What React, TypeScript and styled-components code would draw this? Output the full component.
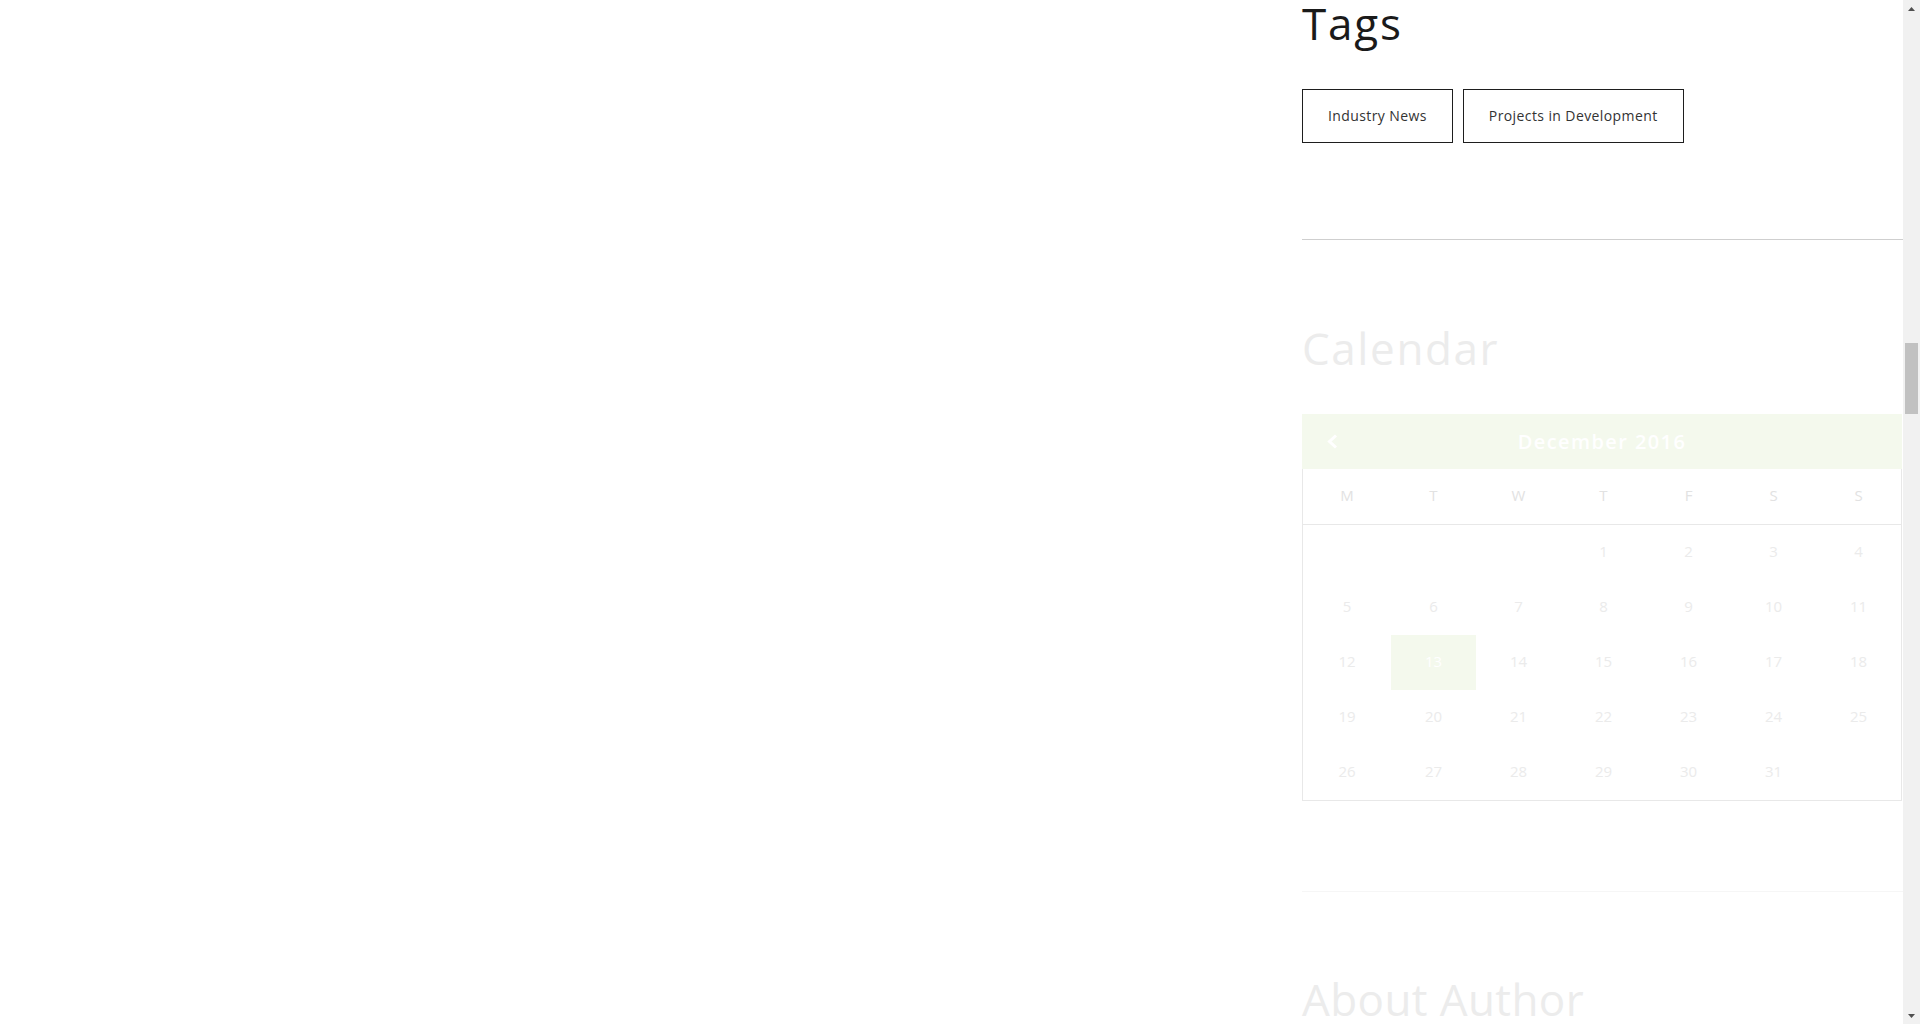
import styled, { createGlobalStyle } from 'styled-components'

const GREEN_TINT = '#f4f9ed'
const FONT = `'Open Sans', 'Liberation Sans', sans-serif`

const GlobalStyle = createGlobalStyle`
  html, body {
    margin: 0;
    padding: 0;
    background: #ffffff;
    overflow: hidden;
  }
  body {
    font-family: ${FONT};
  }
`

const Viewport = styled.div`
  display: flex;
  width: 100%;
  height: 100vh;
  overflow: hidden;
`

const Page = styled.div`
  flex: 1;
  display: grid;
  grid-template-columns: 1fr 601px;
`

const Sidebar = styled.aside`
  display: flex;
  flex-direction: column;
`

type WidgetProps = {
  top: number
  bottom: number
  faintLine?: boolean
}
const Widget = styled.section<WidgetProps>`
  padding-top: ${(props) => props.top}px;
  padding-bottom: ${(props) => props.bottom}px;
  border-bottom: 1px solid ${(props) => (props.faintLine ? '#f6f6f6' : '#cfcfcf')};

  &:last-child {
    border-bottom: none;
  }
`

type HeadingProps = {
  faded?: boolean
  spread?: number
}
const Heading = styled.h3<HeadingProps>`
  margin: 0 0 44px 0;
  font-family: ${FONT};
  font-size: 44px;
  line-height: 44px;
  font-weight: 400;
  letter-spacing: ${(props) => props.spread ?? 1}px;
  color: ${(props) => (props.faded ? '#ececec' : '#1a1a1a')};
`

const TagList = styled.div`
  display: flex;
  flex-wrap: wrap;
  gap: 10px;
`

const Tag = styled.a`
  display: inline-block;
  padding: 15px 25px;
  margin-bottom: 5px;
  border: 1px solid #1e1e1e;
  font-size: 14px;
  line-height: 22px;
  letter-spacing: 0.4px;
  color: #333333;
  text-decoration: none;
`

const Calendar = styled.div`
  width: 600px;
`

const CalendarHeader = styled.div`
  display: grid;
  grid-template-columns: 60px 1fr 60px;
  align-items: center;
  height: 55px;
  background: ${GREEN_TINT};
`

const PrevButton = styled.span`
  display: flex;
  align-items: center;
  padding-left: 25px;
`

const MonthTitle = styled.div`
  text-align: center;
  font-size: 20px;
  font-weight: 600;
  letter-spacing: 1.4px;
  color: #ffffff;
`

const Grid = styled.div`
  border: 1px solid #e8e8e8;
  border-top: none;
`

const WeekRow = styled.div`
  display: grid;
  grid-template-columns: 88px repeat(6, 1fr);
  height: 55px;
  border-bottom: 1px solid #e8e8e8;
`

const DayRow = styled.div`
  display: grid;
  grid-template-columns: 88px repeat(6, 1fr);
  height: 55px;
`

type CellProps = {
  active?: boolean
  head?: boolean
}
const Cell = styled.div<CellProps>`
  display: flex;
  align-items: center;
  justify-content: center;
  padding-bottom: 3px;
  font-size: 15px;
  color: ${(props) =>
    props.active ? '#ffffff' : props.head ? '#e2e2e2' : '#ebebeb'};
  background: ${(props) => (props.active ? GREEN_TINT : 'transparent')};
`

const Scrollbar = styled.div`
  width: 17px;
  display: flex;
  flex-direction: column;
  align-items: center;
  background: #f1f1f1;
`

const Arrow = styled.div`
  height: 17px;
  width: 17px;
  display: flex;
  align-items: center;
  justify-content: center;
`

const Thumb = styled.div`
  width: 13px;
  height: 71px;
  margin-top: 326px;
  background: #c1c1c1;
`

const Spacer = styled.div`
  flex: 1;
`

const WEEKDAYS = ['M', 'T', 'W', 'T', 'F', 'S', 'S']
const WEEKS: (number | null)[][] = [
  [null, null, null, 1, 2, 3, 4],
  [5, 6, 7, 8, 9, 10, 11],
  [12, 13, 14, 15, 16, 17, 18],
  [19, 20, 21, 22, 23, 24, 25],
  [26, 27, 28, 29, 30, 31, null],
]

export default function App() {
  return (
    <>
      <GlobalStyle />
      <Viewport>
        <Page>
          <div />
          <Sidebar>
            <Widget top={1} bottom={91}>
              <Heading spread={1.8}>Tags</Heading>
              <TagList>
                <Tag href="#">Industry News</Tag>
                <Tag href="#">Projects in Development</Tag>
              </TagList>
            </Widget>
            <Widget top={86} bottom={90} faintLine>
              <Heading faded spread={1.6}>
                Calendar
              </Heading>
              <Calendar>
                <CalendarHeader>
                  <PrevButton>
                    <svg width="11" height="15" viewBox="0 0 11 15">
                      <polyline
                        points="9,1.5 2.5,7.5 9,13.5"
                        fill="none"
                        stroke="#ffffff"
                        strokeWidth="3"
                      />
                    </svg>
                  </PrevButton>
                  <MonthTitle>December 2016</MonthTitle>
                  <span />
                </CalendarHeader>
                <Grid>
                  <WeekRow>
                    {WEEKDAYS.map((d, i) => (
                      <Cell key={i} head>
                        {d}
                      </Cell>
                    ))}
                  </WeekRow>
                  {WEEKS.map((week, w) => (
                    <DayRow key={w}>
                      {week.map((day, i) => (
                        <Cell key={i} active={day === 13}>
                          {day}
                        </Cell>
                      ))}
                    </DayRow>
                  ))}
                </Grid>
              </Calendar>
            </Widget>
            <Widget top={85} bottom={0}>
              <Heading faded spread={0.4}>
                About Author
              </Heading>
            </Widget>
          </Sidebar>
        </Page>
        <Scrollbar>
          <Arrow>
            <svg width="7" height="4" viewBox="0 0 7 4">
              <polygon points="0,4 3.5,0 7,4" fill="#505050" />
            </svg>
          </Arrow>
          <Thumb />
          <Spacer />
          <Arrow>
            <svg width="7" height="4" viewBox="0 0 7 4">
              <polygon points="0,0 3.5,4 7,0" fill="#505050" />
            </svg>
          </Arrow>
        </Scrollbar>
      </Viewport>
    </>
  )
}
